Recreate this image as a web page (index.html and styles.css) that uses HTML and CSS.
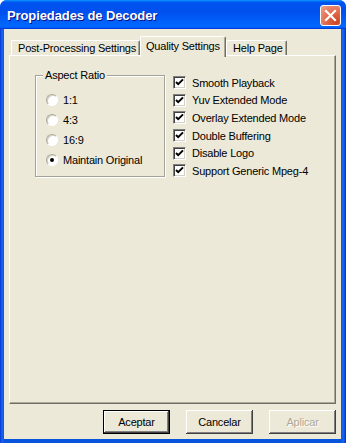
FILE: index.html
```html
<!DOCTYPE html>
<html>
<head>
<meta charset="utf-8">
<link rel="stylesheet" href="styles.css">
</head>
<body>
<div class="window">
  <div class="titlebar">
    <span class="title">Propiedades de Decoder</span>
    <span class="close">
      <svg width="19" height="19" viewBox="0 0 19 19"><path d="M5 5 L14 14 M14 5 L5 14" stroke="#fff" stroke-width="2.2" stroke-linecap="square"/></svg>
    </span>
  </div>
  <div class="frame">
    <div class="client">
      <div class="tabs">
        <div class="tab t1">Post-Processing Settings</div>
        <div class="tab active">Quality Settings</div>
        <div class="tab t3">Help Page</div>
      </div>
      <div class="panel">
        <fieldset class="group">
          <legend>Aspect Ratio</legend>
          <div class="radio"><span class="rb"></span>1:1</div>
          <div class="radio"><span class="rb"></span>4:3</div>
          <div class="radio"><span class="rb"></span>16:9</div>
          <div class="radio"><span class="rb on"></span>Maintain Original</div>
        </fieldset>
        <div class="checks">
          <div class="check"><span class="cb"><svg width="9" height="9" viewBox="0 0 9 9"><path d="M1 4 L3.2 6.2 L8 1.4" fill="none" stroke="#000" stroke-width="2"/></svg></span>Smooth Playback</div>
          <div class="check"><span class="cb"><svg width="9" height="9" viewBox="0 0 9 9"><path d="M1 4 L3.2 6.2 L8 1.4" fill="none" stroke="#000" stroke-width="2"/></svg></span>Yuv Extended Mode</div>
          <div class="check"><span class="cb"><svg width="9" height="9" viewBox="0 0 9 9"><path d="M1 4 L3.2 6.2 L8 1.4" fill="none" stroke="#000" stroke-width="2"/></svg></span>Overlay Extended Mode</div>
          <div class="check"><span class="cb"><svg width="9" height="9" viewBox="0 0 9 9"><path d="M1 4 L3.2 6.2 L8 1.4" fill="none" stroke="#000" stroke-width="2"/></svg></span>Double Buffering</div>
          <div class="check"><span class="cb"><svg width="9" height="9" viewBox="0 0 9 9"><path d="M1 4 L3.2 6.2 L8 1.4" fill="none" stroke="#000" stroke-width="2"/></svg></span>Disable Logo</div>
          <div class="check"><span class="cb"><svg width="9" height="9" viewBox="0 0 9 9"><path d="M1 4 L3.2 6.2 L8 1.4" fill="none" stroke="#000" stroke-width="2"/></svg></span>Support Generic Mpeg-4</div>
        </div>
      </div>
      <div class="buttons">
        <div class="btn default">Aceptar</div>
        <div class="btn">Cancelar</div>
        <div class="btn disabled">Aplicar</div>
      </div>
    </div>
  </div>
</div>
</body>
</html>
```
FILE: styles.css
```css
html, body {
  margin: 0;
  padding: 0;
  background: #fff;
}
body {
  width: 346px;
  height: 443px;
  overflow: hidden;
  font-family: "Liberation Sans", Arial, sans-serif;
  font-size: 11px;
  letter-spacing: -0.2px;
  color: #000;
}
.window {
  width: 346px;
  height: 443px;
  display: flex;
  flex-direction: column;
  border-radius: 7px 7px 0 0;
  overflow: hidden;
  background: #0a4bdc;
}
.titlebar {
  height: 29px;
  flex: none;
  display: flex;
  align-items: center;
  justify-content: space-between;
  background: linear-gradient(180deg, #0997ff, #0053ee 8%, #0050ee 40%, #0066ff 88%, #0066ff 93%, #005bff 95%, #003dd7 96%, #003dd7);
}
.title {
  padding-left: 7px;
  padding-top: 1px;
  color: #fff;
  font-weight: bold;
  font-size: 13px;
  letter-spacing: -0.1px;
  text-shadow: 1px 1px #0f1089;
}
.close {
  width: 21px;
  height: 21px;
  box-sizing: border-box;
  margin-right: 5px;
  margin-top: 1px;
  border: 1px solid #fff;
  border-radius: 3px;
  background: radial-gradient(circle at 80% 85%, #cc4622 0%, #e0684a 45%, #eea38e 100%);
  display: flex;
  align-items: center;
  justify-content: center;
}
.close svg { display: block; }
.frame {
  flex: 1;
  display: flex;
  padding: 0 5px 4px 4px;
  background: linear-gradient(90deg, #0831d9 0, #166aee 2px, #0855dd 4px, #0855dd calc(100% - 5px), #166aee calc(100% - 3px), #0831d9 100%);
}
.client {
  flex: 1;
  background: #ece9d8;
  display: flex;
  flex-direction: column;
  padding: 7px 5px 0 5px;
}
.tabs {
  height: 19px;
  display: flex;
  align-items: flex-start;
  padding-left: 2px;
  position: relative;
  z-index: 1;
}
.tab {
  box-sizing: border-box;
  border-left: 1px solid #fff;
  border-top: 1px solid #fff;
  border-right: 1px solid #716f64;
  box-shadow: inset -1px 0 #aca899;
  border-radius: 2px 2px 0 0;
  padding: 0 0 0 6px;
  line-height: 14px;
  white-space: nowrap;
  background: #ece9d8;
}
.t1 {
  margin-top: 4px;
  height: 15px;
  width: 129px;
}
.active {
  height: 21px;
  width: 86px;
  padding-top: 2px;
  padding-left: 5px;
}
.t3 {
  margin-top: 4px;
  height: 15px;
  width: 61px;
}
.panel {
  height: 349px;
  box-sizing: border-box;
  border: 1px solid;
  border-color: #fff #716f64 #716f64 #fff;
  box-shadow: inset -1px -1px #aca899;
  display: flex;
  align-items: flex-start;
}
.group {
  margin: 13px 0 0 25px;
  width: 130px;
  box-sizing: border-box;
  padding: 8px 8px 6px 8px;
  border: 1px solid #a5a297;
  box-shadow: 1px 1px 0 #fff, inset 1px 1px 0 #fff;
  min-width: 0;
}
.group legend {
  padding: 0 2px;
  margin-left: -1px;
  line-height: 13px;
  background: #ece9d8;
}
.radio {
  height: 20px;
  display: flex;
  align-items: center;
  gap: 5px;
  padding-left: 2px;
}
.rb {
  width: 12px;
  height: 12px;
  box-sizing: border-box;
  border-radius: 50%;
  border: 1px solid;
  border-color: #aca899 #fff #fff #aca899;
  background: #fff;
  box-shadow: inset 1px 1px 0 #d4d0c8;
  display: flex;
  align-items: center;
  justify-content: center;
  flex: none;
}
.rb.on::after {
  content: "";
  width: 4px;
  height: 4px;
  border-radius: 50%;
  background: #000;
}
.checks {
  margin: 18px 0 0 8px;
}
.check {
  height: 17.6px;
  display: flex;
  align-items: center;
  gap: 6px;
}
.cb {
  width: 13px;
  height: 13px;
  box-sizing: border-box;
  border: 1px solid;
  border-color: #808080 #fff #fff #808080;
  box-shadow: inset 1px 1px 0 #404040, inset -1px -1px 0 #d4d0c8;
  background: #fff;
  display: flex;
  align-items: center;
  justify-content: center;
  flex: none;
}
.cb svg { display: block; }
.buttons {
  margin-top: 6px;
  display: flex;
  justify-content: flex-end;
  gap: 16px;
}
.btn {
  width: 67px;
  height: 24px;
  box-sizing: border-box;
  display: flex;
  align-items: center;
  justify-content: center;
  background: #ece9d8;
  box-shadow: inset -1px -1px 0 #404040, inset 1px 1px 0 #fff, inset -2px -2px 0 #808080;
}
.btn.default {
  border: 1px solid #000;
}
.btn.disabled {
  color: #aca899;
  text-shadow: 1px 1px 0 #fff;
}
```
